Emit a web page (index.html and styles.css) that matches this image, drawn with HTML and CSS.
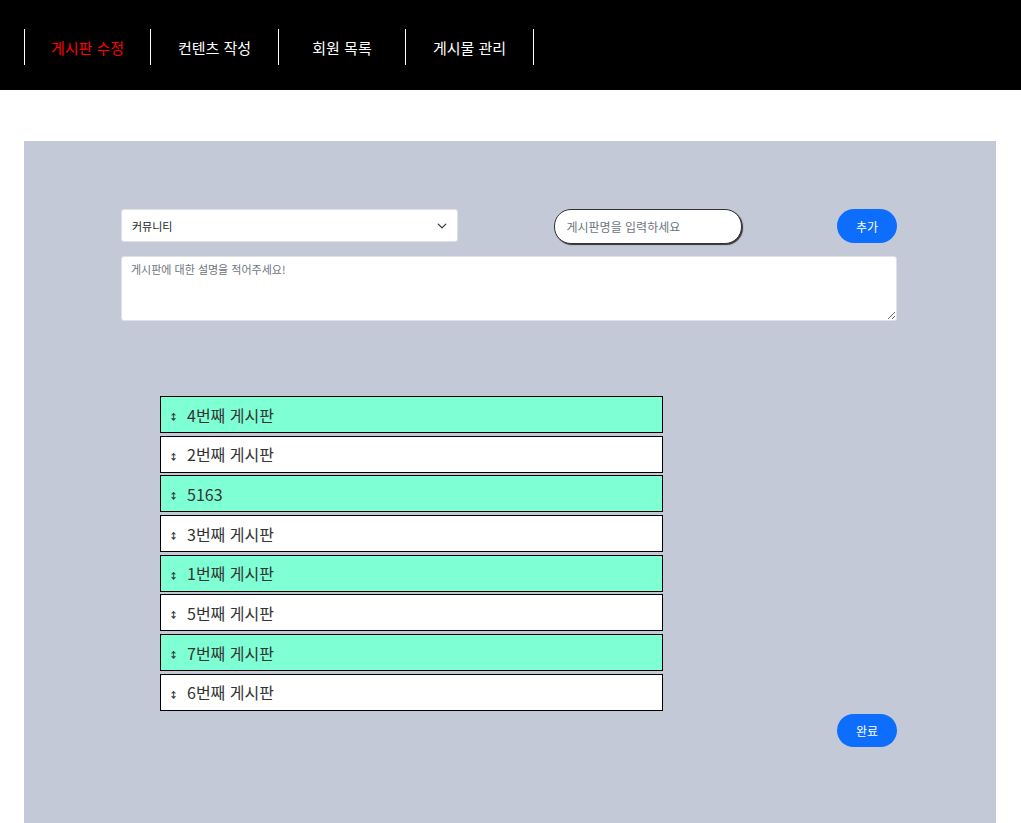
FILE: index.html
```html
<!DOCTYPE html>
<html lang="ko">
<head>
<meta charset="utf-8">
<link rel="stylesheet" href="styles.css">
</head>
<body>
<header class="header">
  <nav class="nav">
    <a class="nav-item active">게시판 수정</a>
    <a class="nav-item">컨텐츠 작성</a>
    <a class="nav-item">회원 목록</a>
    <a class="nav-item">게시물 관리</a>
  </nav>
</header>
<main class="panel">
  <div class="form">
    <div class="row">
      <div class="select-wrap">
        <select class="select"><option>커뮤니티</option></select>
        <svg class="chevron" width="10" height="10" viewBox="0 0 16 16"><path d="M2 5l6 6 6-6" fill="none" stroke="#343a40" stroke-width="2" stroke-linecap="round" stroke-linejoin="round"/></svg>
      </div>
      <input class="name-input" type="text" placeholder="게시판명을 입력하세요">
      <button class="btn">추가</button>
    </div>
    <textarea class="desc" placeholder="게시판에 대한 설명을 적어주세요!"></textarea>
    <ul class="list">
      <li class="item alt"><span class="grip">↕</span>4번째 게시판</li>
      <li class="item"><span class="grip">↕</span>2번째 게시판</li>
      <li class="item alt"><span class="grip">↕</span>5163</li>
      <li class="item"><span class="grip">↕</span>3번째 게시판</li>
      <li class="item alt"><span class="grip">↕</span>1번째 게시판</li>
      <li class="item"><span class="grip">↕</span>5번째 게시판</li>
      <li class="item alt"><span class="grip">↕</span>7번째 게시판</li>
      <li class="item"><span class="grip">↕</span>6번째 게시판</li>
    </ul>
    <div class="done-row"><button class="btn">완료</button></div>
  </div>
</main>
</body>
</html>
```
FILE: styles.css
```css
* { box-sizing: border-box; }
html, body { margin: 0; padding: 0; }
body {
  font-family: "Noto Sans CJK KR", "Noto Sans", sans-serif;
  background: #fff;
  overflow: hidden;
}
.header {
  background: #000;
  height: 90px;
  display: flex;
  align-items: center;
  padding-left: 24px;
  padding-top: 4px;
}
.nav {
  display: flex;
  border-left: 1px solid #fff;
}
.nav-item {
  display: flex;
  align-items: center;
  justify-content: center;
  height: 36px;
  border-right: 1px solid #fff;
  color: #fff;
  font-size: 15px;
  text-decoration: none;
}
.nav-item:nth-child(1) { width: 126px; }
.nav-item:nth-child(2) { width: 128px; }
.nav-item:nth-child(3) { width: 127px; }
.nav-item:nth-child(4) { width: 128px; }
.nav-item.active { color: #ff0000; }
.panel {
  margin: 51px 25px 0 24px;
  background: #c4c9d7;
  height: 740px;
  padding: 68px 99px 0 97px;
}
.form { display: flex; flex-direction: column; }
.row {
  display: flex;
  justify-content: space-between;
  align-items: flex-start;
}
.select-wrap { position: relative; width: 337px; }
.select {
  appearance: none;
  -webkit-appearance: none;
  display: block;
  width: 100%;
  height: 33px;
  border: 1px solid #dee2e6;
  border-radius: 3px;
  background: #fff;
  font-family: inherit;
  font-size: 11px;
  color: #212529;
  padding: 0 10px;
}
.chevron { position: absolute; right: 11px; top: 12px; }
.name-input {
  width: 188px;
  height: 35px;
  border: 1px solid #333;
  border-radius: 17px;
  box-shadow: 1px 1px 1px #333;
  font-family: inherit;
  font-size: 12px;
  padding: 0 12px;
  outline: none;
}
.name-input::placeholder { color: #6c757d; }
.btn {
  width: 60px;
  height: 34px;
  border: none;
  border-radius: 17px;
  background: #0d6efd;
  color: #fff;
  font-family: inherit;
  font-size: 12px;
}
.desc {
  display: block;
  margin-top: 12px;
  height: 65px;
  width: 100%;
  border: 1px solid #dee2e6;
  border-radius: 3px;
  font-family: inherit;
  font-size: 11px;
  padding: 4px 9px;
  resize: vertical;
}
.desc::placeholder { color: #6c757d; }
.list {
  list-style: none;
  margin: 75px 0 0 39px;
  padding: 0;
  width: 503px;
  display: flex;
  flex-direction: column;
  gap: 2.7px;
}
.item {
  height: 37px;
  border: 1px solid #000;
  background: #fff;
  display: flex;
  align-items: center;
  font-size: 16px;
  color: #333;
}
.item.alt { background: #7fffd4; }
.grip {
  font-size: 9px;
  width: 26px;
  padding-left: 8px;
  color: #333;
  font-weight: bold;
  margin-top: 4px;
}
.done-row {
  display: flex;
  justify-content: flex-end;
  margin-top: 3px;
}
.done-row .btn { height: 33px; }
```
